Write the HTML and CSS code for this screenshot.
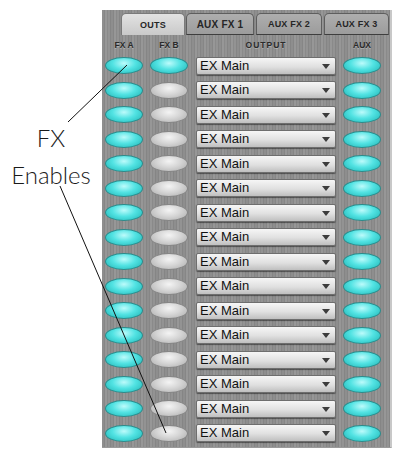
FILE: index.html
```html
<!DOCTYPE html>
<html>
<head>
<meta charset="utf-8">
<link rel="stylesheet" href="styles.css">
</head>
<body>
<div class="page">
  <div class="callout">
    <span class="callout-line">FX</span>
    <span class="callout-line">Enables</span>
  </div>
  <div class="panel">
    <div class="tabs">
      <div class="tab tab-active">OUTS</div>
      <div class="tab tab-wide">AUX FX 1</div>
      <div class="tab">AUX FX 2</div>
      <div class="tab">AUX FX 3</div>
    </div>
    <div class="grid">
      <div class="head oval-col">FX A</div>
      <div class="head oval-col">FX B</div>
      <div class="head out-col">OUTPUT</div>
      <div class="head oval-col">AUX</div>

      <div class="oval on"></div><div class="oval on"></div><div class="select">EX Main</div><div class="oval on"></div>
      <div class="oval on"></div><div class="oval"></div><div class="select">EX Main</div><div class="oval on"></div>
      <div class="oval on"></div><div class="oval"></div><div class="select">EX Main</div><div class="oval on"></div>
      <div class="oval on"></div><div class="oval"></div><div class="select">EX Main</div><div class="oval on"></div>
      <div class="oval on"></div><div class="oval"></div><div class="select">EX Main</div><div class="oval on"></div>
      <div class="oval on"></div><div class="oval"></div><div class="select">EX Main</div><div class="oval on"></div>
      <div class="oval on"></div><div class="oval"></div><div class="select">EX Main</div><div class="oval on"></div>
      <div class="oval on"></div><div class="oval"></div><div class="select">EX Main</div><div class="oval on"></div>
      <div class="oval on"></div><div class="oval"></div><div class="select">EX Main</div><div class="oval on"></div>
      <div class="oval on"></div><div class="oval"></div><div class="select">EX Main</div><div class="oval on"></div>
      <div class="oval on"></div><div class="oval"></div><div class="select">EX Main</div><div class="oval on"></div>
      <div class="oval on"></div><div class="oval"></div><div class="select">EX Main</div><div class="oval on"></div>
      <div class="oval on"></div><div class="oval"></div><div class="select">EX Main</div><div class="oval on"></div>
      <div class="oval on"></div><div class="oval"></div><div class="select">EX Main</div><div class="oval on"></div>
      <div class="oval on"></div><div class="oval"></div><div class="select">EX Main</div><div class="oval on"></div>
      <div class="oval on"></div><div class="oval"></div><div class="select">EX Main</div><div class="oval on"></div>
    </div>
  </div>
  <svg class="leaders" width="401" height="454" viewBox="0 0 401 454">
    <line x1="68" y1="122" x2="127" y2="65" stroke="#111" stroke-width="1"/>
    <line x1="60" y1="186" x2="166" y2="433" stroke="#111" stroke-width="1"/>
  </svg>
</div>
</body>
</html>
```
FILE: styles.css
```css
html, body {
  margin: 0;
  padding: 0;
  background: #ffffff;
}

.page {
  position: relative;
  display: flex;
  width: 401px;
  height: 454px;
  overflow: hidden;
}

.callout {
  width: 102px;
  flex: none;
  padding-top: 119px;
  display: flex;
  flex-direction: column;
  align-items: center;
  font-family: Lato, "Open Sans", sans-serif;
  font-weight: 300;
  font-size: 24px;
  line-height: 37px;
  color: #1a1a1a;
  box-sizing: border-box;
}

.panel {
  margin-top: 10px;
  width: 290px;
  height: 438px;
  flex: none;
  background:
    repeating-linear-gradient(90deg,
      #8e8e8e 0px, #8e8e8e 2px,
      #868686 2px, #868686 3px,
      #979797 3px, #979797 5px,
      #8a8a8a 5px, #8a8a8a 6px,
      #939393 6px, #939393 8px,
      #858585 8px, #858585 9px);
  border-right: 2px solid #c8c8c8;
  border-bottom: 1px solid #9a9a9a;
  box-sizing: border-box;
}

.tabs {
  display: flex;
  padding: 3px 0 0 19px;
  height: 25px;
  box-sizing: border-box;
  gap: 1px;
}

.tab {
  height: 22px;
  width: 65px;
  box-sizing: border-box;
  border: 1px solid #5e5e5e;
  border-bottom-color: #3e3e3e;
  border-radius: 5px 5px 0 0;
  background: linear-gradient(#aeaeae, #9c9c9c);
  font-family: "Liberation Sans", Arial, sans-serif;
  font-weight: bold;
  font-size: 9px;
  color: #262626;
  display: flex;
  align-items: center;
  justify-content: center;
  letter-spacing: 0.2px;
}

.tab-active {
  width: 64px;
  background: linear-gradient(#e2e2e2, #c9c9c9);
  border-color: #7a7a7a;
  border-bottom: none;
}

.tab-wide {
  width: 68px;
  font-size: 10px;
  margin-right: 1px;
}

.tab:nth-child(3) {
  width: 66px;
  margin-right: 1px;
}

.grid {
  display: grid;
  grid-template-columns: 45px 46px 147px 38px;
  grid-template-rows: 18.75px;
  grid-auto-rows: 24.47px;
  align-items: center;
  padding-left: 3px;
}

.head {
  font-family: "Liberation Sans", Arial, sans-serif;
  font-weight: bold;
  font-size: 8.5px;
  color: #2a2a2a;
  text-align: center;
  padding-top: 2px;
  text-shadow: 0 1px 0 rgba(255, 255, 255, 0.25);
}

.oval-col {
  width: 38px;
}

.out-col {
  width: 140px;
  letter-spacing: 1px;
}

.oval {
  width: 38px;
  height: 17px;
  box-sizing: border-box;
  border-radius: 50%;
  border: 1px solid #868686;
  background: radial-gradient(ellipse at 50% 35%, #f4f4f4 0%, #d6d6d6 45%, #acacac 100%);
}

.oval.on {
  border-color: #2b8c8c;
  background: radial-gradient(ellipse at 50% 35%, #bcfbfb 0%, #52e3e3 45%, #1eb4b4 100%);
}

.select {
  position: relative;
  width: 140px;
  height: 18px;
  box-sizing: border-box;
  border: 1px solid #6e6e6e;
  border-radius: 2px;
  background: linear-gradient(#f6f6f6, #e0e0e0 55%, #bfbfbf);
  box-shadow: 0 1px 1px rgba(0, 0, 0, 0.45);
  font-family: "Liberation Sans", Arial, sans-serif;
  font-size: 13px;
  line-height: 16px;
  color: #111;
  padding-left: 3px;
}

.select::after {
  content: "";
  position: absolute;
  right: 5px;
  top: 6px;
  border-left: 4px solid transparent;
  border-right: 4px solid transparent;
  border-top: 5px solid #3c3c3c;
}

.leaders {
  position: absolute;
  left: 0;
  top: 0;
  pointer-events: none;
}
```
